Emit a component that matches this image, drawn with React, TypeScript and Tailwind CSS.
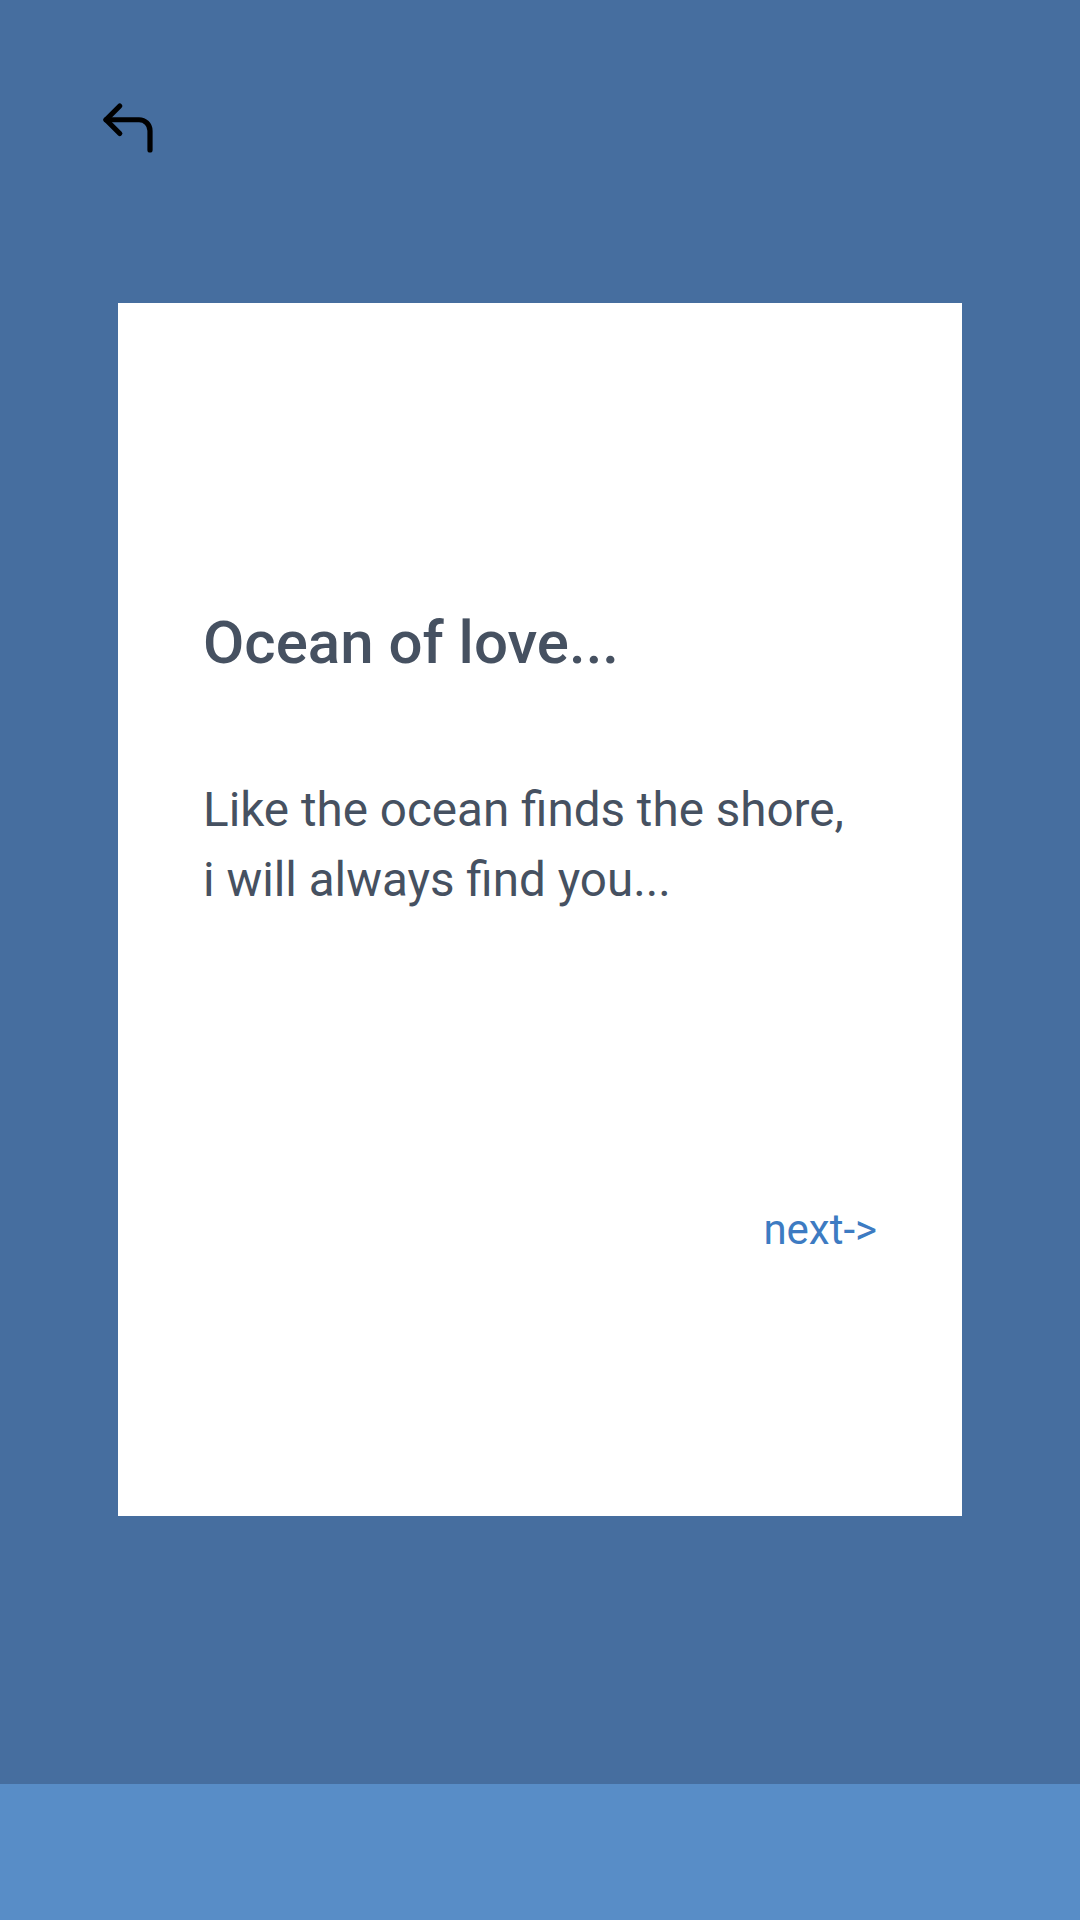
import { CornerUpLeft } from 'lucide-react';

function StoryCard() {
  return (
    <div className="mx-auto flex h-[1213px] w-[844px] flex-col bg-white px-[85px] pt-[310px]">
      <h1 className="text-[60px] font-medium leading-[60px] text-[#465161]">Ocean of love...</h1>

      <p className="mt-[102px] text-[47.6px] leading-[70px] text-[#465161]">
        Like the ocean finds the shore,
        <br />
        i will always find you...
      </p>

      <div className="mt-[294px] flex justify-end">
        <a href="#next" className="text-[42px] leading-[42px] text-[#3d7bc2]">
          next-&gt;
        </a>
      </div>
    </div>
  );
}

export default function App() {
  return (
    <div
      className="flex min-h-[1920px] w-full flex-col bg-[#466e9f]"
      style={{ fontFamily: 'Roboto, "Noto Sans", sans-serif' }}
    >
      {/* Top bar with back arrow */}
      <div className="h-[303px] pl-[95px] pt-[95px]">
        <button type="button" className="block text-black">
          <CornerUpLeft size={66} strokeWidth={1.9} />
        </button>
      </div>

      <StoryCard />

      <div className="flex-1" />

      {/* Bottom strip */}
      <div className="h-[136px] w-full bg-[#588dc7]" />
    </div>
  );
}
